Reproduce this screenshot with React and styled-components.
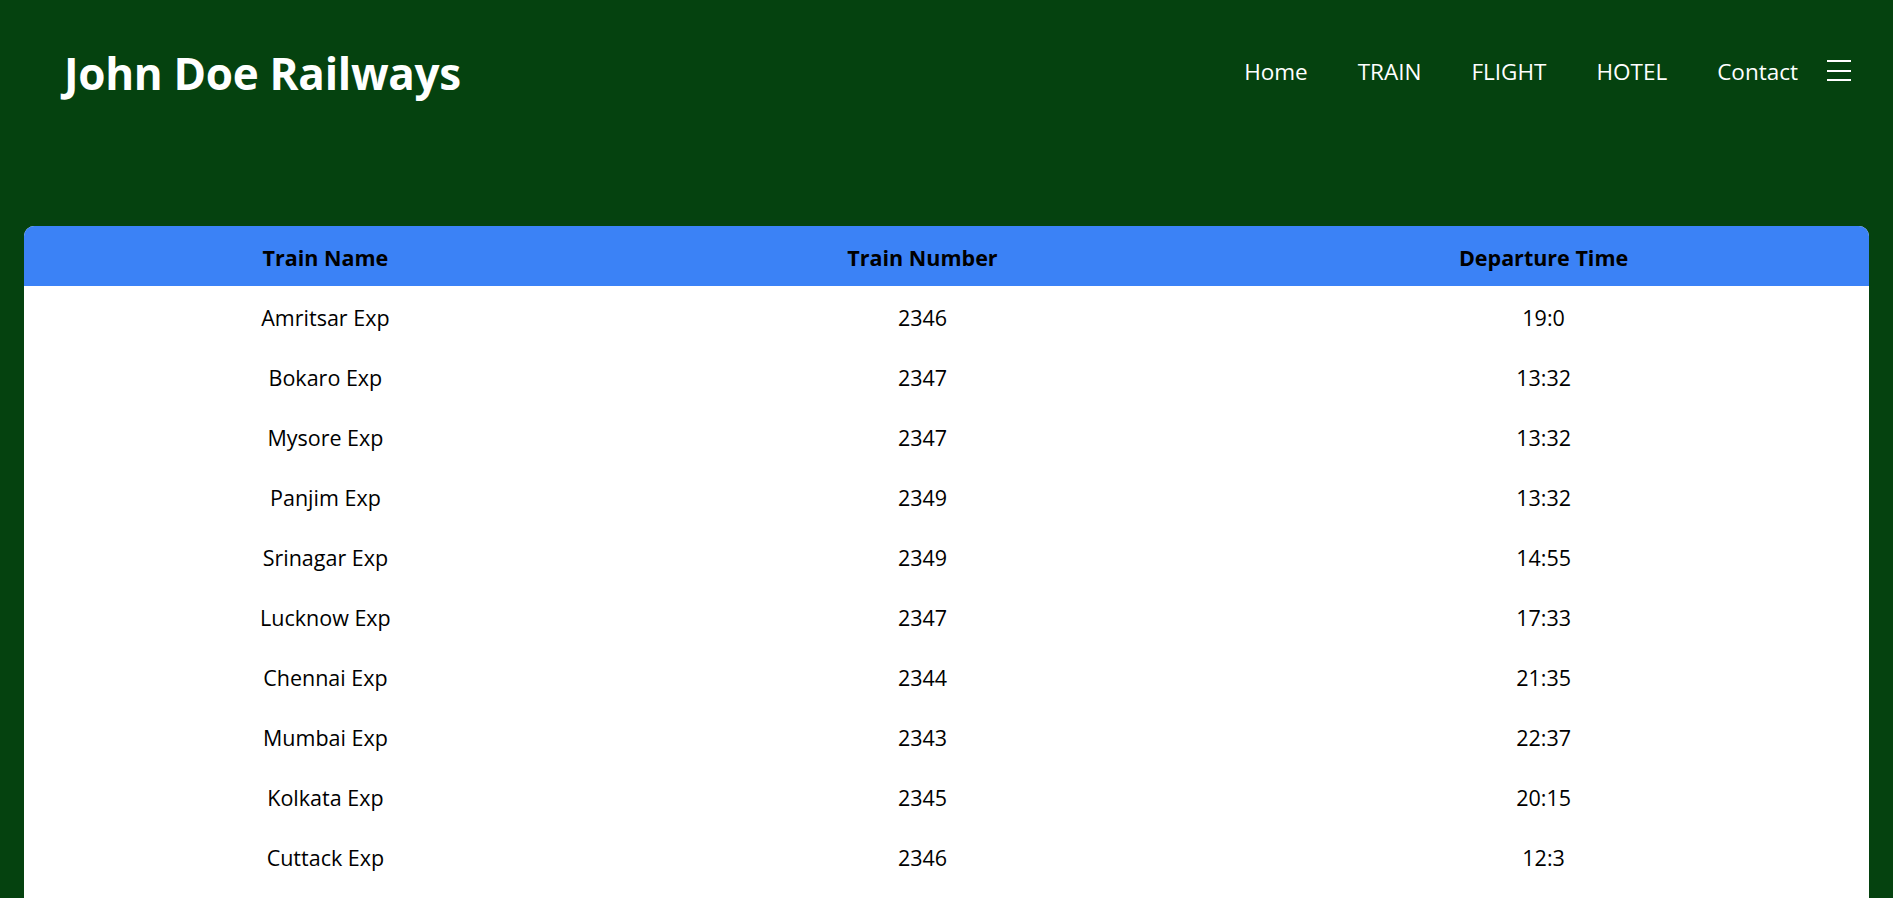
import React from "react";
import styled, { createGlobalStyle } from "styled-components";

const trains = [
  { name: "Amritsar Exp", number: 2346, time: "19:0" },
  { name: "Bokaro Exp", number: 2347, time: "13:32" },
  { name: "Mysore Exp", number: 2347, time: "13:32" },
  { name: "Panjim Exp", number: 2349, time: "13:32" },
  { name: "Srinagar Exp", number: 2349, time: "14:55" },
  { name: "Lucknow Exp", number: 2347, time: "17:33" },
  { name: "Chennai Exp", number: 2344, time: "21:35" },
  { name: "Mumbai Exp", number: 2343, time: "22:37" },
  { name: "Kolkata Exp", number: 2345, time: "20:15" },
  { name: "Cuttack Exp", number: 2346, time: "12:3" },
];

const links = ["Home", "TRAIN", "FLIGHT", "HOTEL", "Contact"];

const App = () => {
  return (
    <Page>
      <GlobalStyle />
      <NavBar>
        <Logo>John Doe Railways</Logo>
        <NavRight>
          <NavList>
            {links.map((link) => (
              <NavLink key={link} href="#">
                {link}
              </NavLink>
            ))}
          </NavList>
          <MenuButton aria-label="menu">
            <svg width="24" height="22" viewBox="0 0 24 22">
              <rect x="0" y="0" width="24" height="2" fill="#fff" />
              <rect x="0" y="10" width="24" height="2" fill="#fff" />
              <rect x="0" y="19" width="24" height="2" fill="#fff" />
            </svg>
          </MenuButton>
        </NavRight>
      </NavBar>

      <TableCard>
        <Table>
          <colgroup>
            <col style={{ width: "32.7%" }} />
            <col style={{ width: "32%" }} />
            <col />
          </colgroup>
          <thead>
            <HeadRow>
              <Th>Train Name</Th>
              <Th>Train Number</Th>
              <Th>Departure Time</Th>
            </HeadRow>
          </thead>
          <tbody>
            {trains.map((train, i) => (
              <tr key={i}>
                <Td>{train.name}</Td>
                <Td>{train.number}</Td>
                <Td>{train.time}</Td>
              </tr>
            ))}
          </tbody>
        </Table>
      </TableCard>
    </Page>
  );
};

export default App;

const GlobalStyle = createGlobalStyle`
  * {
    box-sizing: border-box;
  }
  body {
    margin: 0;
    background-color: #05420f;
    font-family: "Open Sans", "Noto Sans", sans-serif;
  }
`;

const Page = styled.div`
  min-height: 100vh;
  background-color: #05420f;
`;

const NavBar = styled.nav`
  display: flex;
  justify-content: space-between;
  align-items: center;
  height: 146px;
  padding: 0 42px 0 64px;
`;

const Logo = styled.h1`
  margin: 0;
  color: #ffffff;
  font-size: 44px;
  font-weight: 700;
  letter-spacing: -0.3px;
`;

const NavRight = styled.div`
  display: flex;
  align-items: center;
  margin-top: -4px;
`;

const NavList = styled.div`
  display: flex;
  align-items: center;
  gap: 50px;
`;

const NavLink = styled.a`
  color: #ffffff;
  text-decoration: none;
  font-size: 22.5px;
`;

const MenuButton = styled.button`
  display: flex;
  align-items: center;
  margin-left: 29px;
  padding: 0;
  border: none;
  background: none;
  cursor: pointer;
`;

const TableCard = styled.div`
  width: 97.5%;
  margin: 80px auto 0;
  padding-bottom: 60px;
  background-color: #ffffff;
  border-radius: 10px 10px 0 0;
  overflow: hidden;
`;

const Table = styled.table`
  width: 100%;
  border-collapse: collapse;
  table-layout: fixed;
`;

const HeadRow = styled.tr`
  background-color: #3b82f6;
`;

const Th = styled.th`
  height: 60px;
  padding: 2px 0 0;
  color: #000000;
  font-size: 21.5px;
  font-weight: 700;
  text-align: center;
`;

const Td = styled.td`
  height: 60px;
  padding: 3px 0 0;
  color: #000000;
  font-size: 21.5px;
  text-align: center;
`;
